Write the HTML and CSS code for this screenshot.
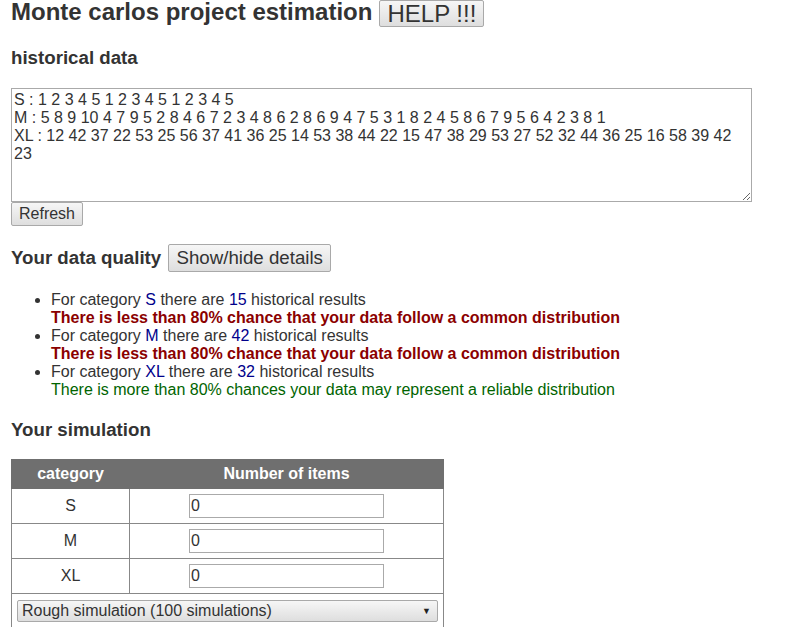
FILE: index.html
```html
<!DOCTYPE html>
<html>
<head>
<meta charset="utf-8">
<link rel="stylesheet" href="styles.css">
</head>
<body>
<div class="page">
  <div class="title-row">
    <h1 class="title">Monte carlos project estimation</h1>
    <button class="btn btn-help">HELP !!!</button>
  </div>

  <h2 class="section first">historical data</h2>
  <textarea class="data">S : 1 2 3 4 5 1 2 3 4 5 1 2 3 4 5
M : 5 8 9 10 4 7 9 5 2 8 4 6 7 2 3 4 8 6 2 8 6 9 4 7 5 3 1 8 2 4 5 8 6 7 9 5 6 4 2 3 8 1
XL : 12 42 37 22 53 25 56 37 41 36 25 14 53 38 44 22 15 47 38 29 53 27 52 32 44 36 25 16 58 39 42 23</textarea>
  <div><button class="btn btn-refresh">Refresh</button></div>

  <div class="quality-row">
    <h2 class="section">Your data quality</h2>
    <button class="btn btn-toggle">Show/hide details</button>
  </div>

  <ul class="quality">
    <li>For category <span class="hl">S</span> there are <span class="hl">15</span> historical results<br><span class="bad">There is less than 80% chance that your data follow a common distribution</span></li>
    <li>For category <span class="hl">M</span> there are <span class="hl">42</span> historical results<br><span class="bad">There is less than 80% chance that your data follow a common distribution</span></li>
    <li>For category <span class="hl">XL</span> there are <span class="hl">32</span> historical results<br><span class="good">There is more than 80% chances your data may represent a reliable distribution</span></li>
  </ul>

  <h2 class="section sim">Your simulation</h2>

  <table class="sim-table">
    <thead>
      <tr><th class="c1">category</th><th class="c2">Number of items</th></tr>
    </thead>
    <tbody>
      <tr><td>S</td><td><input class="num" type="text" value="0"></td></tr>
      <tr><td>M</td><td><input class="num" type="text" value="0"></td></tr>
      <tr><td>XL</td><td><input class="num" type="text" value="0"></td></tr>
      <tr><td colspan="2" class="sel-cell">
        <div class="select">
          <span>Rough simulation (100 simulations)</span>
          <span class="arrow">&#9660;</span>
        </div>
      </td></tr>
    </tbody>
  </table>
</div>
</body>
</html>
```

FILE: styles.css
```css
html, body {
  margin: 0;
  padding: 0;
  background: #fff;
}
body {
  font-family: "Liberation Sans", Arial, sans-serif;
  color: #333;
  font-size: 16px;
}
.page {
  padding-left: 11px;
}
.title-row {
  display: flex;
  align-items: flex-start;
  height: 27px;
}
.title {
  margin: 0;
  font-size: 24px;
  line-height: 23px;
  font-weight: bold;
  color: #333;
}
.btn {
  font-family: "Liberation Sans", Arial, sans-serif;
  color: #333;
  background: linear-gradient(#f6f6f6, #dedede);
  border: 1px solid #a9a9a9;
  border-radius: 2px;
  padding: 0 6px;
  margin: 0;
}
.btn-help {
  margin-left: 7px;
  font-size: 24px;
  height: 27px;
  width: 105px;
  line-height: 25px;
  padding: 0;
}
.section {
  margin: 0;
  font-size: 18.7px;
  font-weight: bold;
  color: #333;
  line-height: 20px;
}
.section.first {
  margin-top: 21px;
}
.data {
  display: block;
  margin-top: 20px;
  width: 741px;
  height: 114px;
  box-sizing: border-box;
  border: 1px solid #aaa;
  padding: 2px 2px;
  font-family: "Liberation Sans", Arial, sans-serif;
  font-size: 16px;
  line-height: 18px;
  color: #333;
  resize: both;
}
.btn-refresh {
  font-size: 16px;
  height: 24px;
  width: 72px;
  padding: 0;
  line-height: 22px;
  display: block;
}
.quality-row {
  display: flex;
  align-items: center;
  margin-top: 18px;
  height: 28px;
}
.btn-toggle {
  margin-left: 7px;
  font-size: 18.7px;
  height: 28px;
  width: 163px;
  padding: 0;
}
.quality {
  margin: 19px 0 0 0;
  padding-left: 40px;
  font-size: 16px;
  line-height: 18px;
}
.hl {
  color: #00008b;
}
.bad {
  color: #8b0000;
  font-weight: bold;
}
.good {
  color: #006400;
}
.sim {
  margin-top: 21px;
}
.sim-table {
  margin-top: 19px;
  border-collapse: collapse;
  width: 433px;
  font-size: 16px;
}
.sim-table th {
  background: #6f6f6f;
  color: #fff;
  font-weight: bold;
  height: 28px;
  padding: 0;
  border: 1px solid #6f6f6f;
  text-align: center;
}
.sim-table th.c1 {
  width: 117px;
}
.sim-table td {
  border: 1px solid #888;
  height: 34px;
  padding: 0;
  text-align: center;
  color: #333;
}
.num {
  width: 195px;
  height: 24px;
  box-sizing: border-box;
  border: 1px solid #aaa;
  font-family: "Liberation Sans", Arial, sans-serif;
  font-size: 16px;
  color: #333;
  padding: 0 1px;
  margin: 0;
  display: block;
  margin-left: 59px;
}
.sel-cell {
  padding: 0 5px !important;
}
.select {
  display: flex;
  justify-content: space-between;
  align-items: center;
  height: 22px;
  box-sizing: border-box;
  border: 1px solid #a9a9a9;
  border-radius: 2px;
  background: linear-gradient(#f6f6f6, #dedede);
  padding: 0 6px 0 4px;
  font-size: 16px;
  color: #333;
  text-align: left;
}
.arrow {
  font-size: 9px;
  color: #222;
}
```
